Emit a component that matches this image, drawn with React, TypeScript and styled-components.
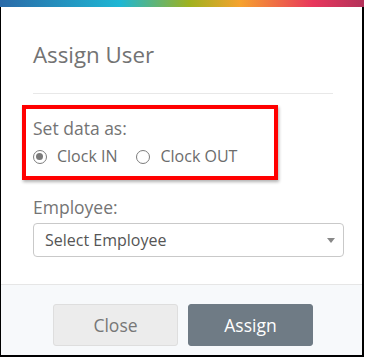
import { useState } from 'react'
import styled, { createGlobalStyle } from 'styled-components'

const GlobalStyle = createGlobalStyle`
  html, body {
    margin: 0;
    padding: 0;
    background: #fff;
  }
  body {
    font-family: 'Open Sans', 'Liberation Sans', sans-serif;
  }
  * {
    box-sizing: border-box;
  }
`

const Frame = styled.div`
  display: flex;
  flex-direction: column;
  width: 364px;
  height: 357px;
`

const RainbowBar = styled.div`
  height: 7px;
  flex-shrink: 0;
  background: linear-gradient(
    90deg,
    #2a6aa8 0%,
    #1eb7d4 33%,
    #9fb21e 52%,
    #f6a22e 66%,
    #e8365c 86%,
    #b3325a 100%
  );
`

const Panel = styled.div`
  flex: 1;
  display: flex;
  flex-direction: column;
  border-left: 1px solid #000;
  border-right: 2px solid #000;
  border-bottom: 2px solid #000;
`

const Header = styled.div`
  padding: 33px 0 0 32px;

  h2 {
    margin: 0;
    font-size: 22.3px;
    line-height: 30px;
    font-weight: 400;
    color: #737373;
  }

  hr {
    width: 300px;
    margin: 23px 0 0;
    border: 0;
    border-top: 1px solid #e8e8e8;
  }
`

const Body = styled.div`
  padding: 11px 0 0 32px;
`

const Highlight = styled.div`
  width: 256px;
  margin-left: -11px;
  padding: 8px 7px 9px;
  border: 4px solid #ff0000;
  box-shadow: 1px 2px 3px rgba(0, 0, 0, 0.3);
`

const FieldLabel = styled.div`
  font-size: 17.5px;
  line-height: 22px;
  color: #747474;
`

const RadioRow = styled.div`
  display: flex;
  align-items: center;
  margin-top: 6px;
  height: 22px;
`

const RadioOption = styled.label`
  display: flex;
  align-items: center;
  font-size: 16px;
  line-height: 22px;
  color: #6c6c6c;
  cursor: pointer;

  & + & {
    margin-left: 19px;
  }
`

const RadioDot = styled.span<{ $checked?: boolean }>`
  position: relative;
  width: 14px;
  height: 14px;
  margin: 2px 10px 0 0;
  border-radius: 50%;
  border: 1.5px solid #7c7c7c;
  background: #fff;

  &::after {
    content: '';
    display: ${(p) => (p.$checked ? 'block' : 'none')};
    position: absolute;
    left: 2px;
    top: 2px;
    width: 7px;
    height: 7px;
    border-radius: 50%;
    background: #7a7a7a;
  }
`

const EmployeeLabel = styled(FieldLabel)`
  margin-top: 16px;
`

const SelectBox = styled.div`
  display: flex;
  align-items: center;
  justify-content: space-between;
  width: 311px;
  height: 34px;
  margin-top: 5px;
  padding: 0 8px 0 11px;
  border: 1px solid #c9c9c9;
  border-radius: 4px;
  font-size: 16px;
  color: #555;
`

const Caret = styled.span`
  width: 0;
  height: 0;
  margin-top: 1px;
  border-left: 4.5px solid transparent;
  border-right: 4.5px solid transparent;
  border-top: 5px solid #888;
`

const Footer = styled.div`
  margin-top: auto;
  display: flex;
  justify-content: center;
  gap: 10px;
  padding: 19px 0 9px 3px;
  border-top: 1px solid #e6e6e6;
  background: #f7f9fb;
`

const Button = styled.button<{ $primary?: boolean }>`
  width: 125px;
  height: 42px;
  border-radius: 3px;
  font-family: inherit;
  font-size: 17.5px;
  border: 1px solid ${(p) => (p.$primary ? '#6f7b85' : '#dedede')};
  background: ${(p) => (p.$primary ? '#6f7b85' : '#ececec')};
  color: ${(p) => (p.$primary ? '#fff' : '#777')};
  cursor: pointer;
`

export default function App() {
  const [mode, setMode] = useState<'in' | 'out'>('in')
  return (
    <>
      <GlobalStyle />
      <Frame>
        <RainbowBar />
        <Panel>
          <Header>
            <h2>Assign User</h2>
            <hr />
          </Header>
          <Body>
            <Highlight>
              <FieldLabel>Set data as:</FieldLabel>
              <RadioRow>
                <RadioOption onClick={() => setMode('in')}>
                  <RadioDot $checked={mode === 'in'} />
                  Clock IN
                </RadioOption>
                <RadioOption onClick={() => setMode('out')}>
                  <RadioDot $checked={mode === 'out'} />
                  Clock OUT
                </RadioOption>
              </RadioRow>
            </Highlight>
            <EmployeeLabel>Employee:</EmployeeLabel>
            <SelectBox>
              Select Employee
              <Caret />
            </SelectBox>
          </Body>
          <Footer>
            <Button>Close</Button>
            <Button $primary>Assign</Button>
          </Footer>
        </Panel>
      </Frame>
    </>
  )
}
